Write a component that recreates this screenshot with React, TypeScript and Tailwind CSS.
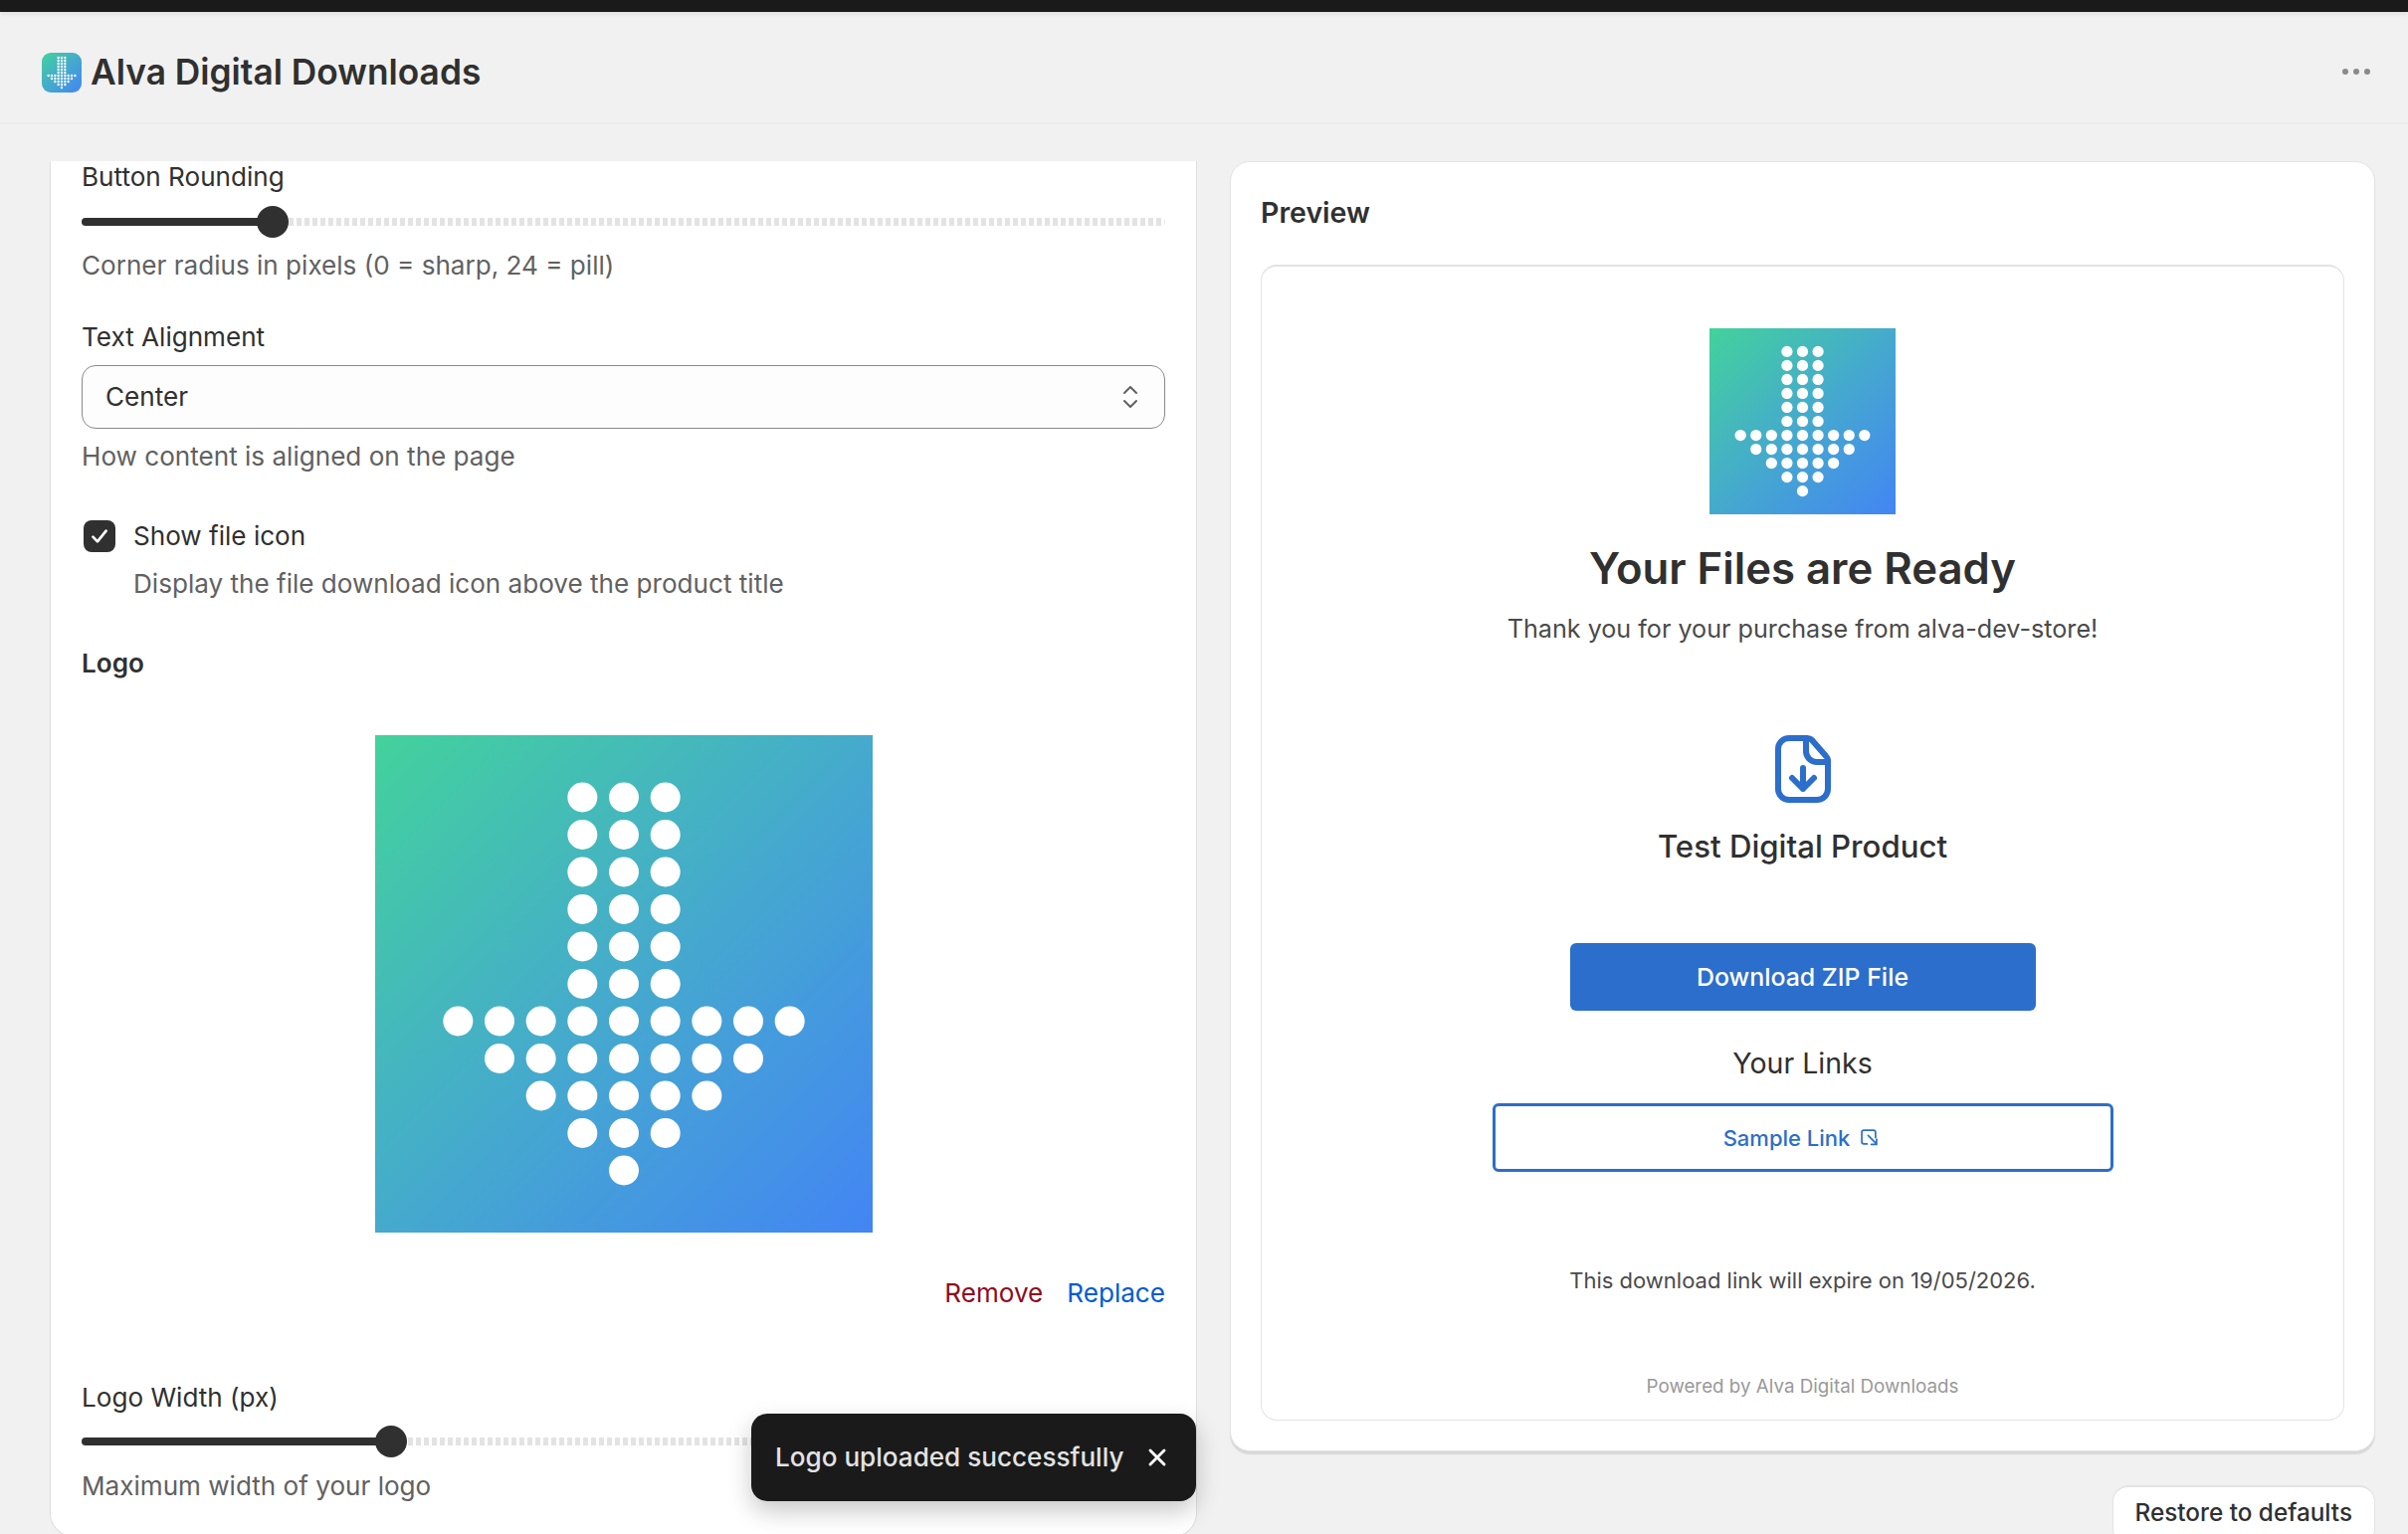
import { useId } from 'react'
import { X } from 'lucide-react'

const ROWS: [number, number][] = [
  [15, 1], [24, 1], [33, 1], [42, 1], [51, 1], [60, 1],
  [69, 4], [78, 3], [87, 2], [96, 1], [105, 0],
]

function AlvaLogo({ className }: { className: string }) {
  const id = useId()
  return (
    <svg viewBox="0 0 120 120" className={className} preserveAspectRatio="none">
      <defs>
        <linearGradient id={id} x1="0" y1="0" x2="1" y2="1">
          <stop offset="0" stopColor="#43d29c" />
          <stop offset="0.5" stopColor="#45aacd" />
          <stop offset="1" stopColor="#4385f4" />
        </linearGradient>
      </defs>
      <rect width="120" height="120" fill={`url(#${id})`} />
      {ROWS.map(([y, half]) =>
        Array.from({ length: half * 2 + 1 }, (_, i) => (
          <circle key={`${y}-${i}`} cx={60 + (i - half) * 10} cy={y} r="3.6" fill="#fff" />
        )),
      )}
    </svg>
  )
}

function Slider({ wide }: { wide?: boolean }) {
  return (
    <div className="relative h-8 flex items-center">
      <div className="h-2 w-full rounded-full bg-[repeating-linear-gradient(90deg,#e3e3e3_0_5px,transparent_5px_8px)]" />
      <div className={`absolute left-0 h-2 rounded-full bg-[#303030] ${wide ? 'w-[311px]' : 'w-[192px]'}`} />
      <div className={`absolute top-0 size-8 -ml-[16px] rounded-full bg-[#303030] ${wide ? 'left-[311px]' : 'left-[192px]'}`} />
    </div>
  )
}

export default function App() {
  return (
    <div className="relative h-[1542px] overflow-hidden bg-[#f1f1f1] font-['Inter',sans-serif] text-[26.1px] leading-8 text-[#303030]">
      <div className="h-3 bg-[#1a1a1a] shadow-[0_2px_4px_rgba(0,0,0,0.08)]" />

      {/* App title bar */}
      <div className="flex h-[113px] items-center border-b-2 border-[#ebebeb] pl-[42px] pr-[38px] pt-[10px]">
        <AlvaLogo className="size-10 rounded-[9px]" />
        <span className="ml-[9px] text-[35.3px] font-semibold leading-10">Alva Digital Downloads</span>
        <div className="ml-auto flex gap-[5px] -mt-[2px]">
          <span className="size-1.5 rounded-full bg-[#8a8a8a]" />
          <span className="size-1.5 rounded-full bg-[#8a8a8a]" />
          <span className="size-1.5 rounded-full bg-[#8a8a8a]" />
        </div>
      </div>

      <div className="flex gap-[33px] pl-[50px] pr-[33px] pt-[37px]">
        {/* Settings card, scrolled */}
        <div className="h-[1383px] w-[1153px] shrink-0 rounded-b-[24px] border-x border-b border-[#dedede] bg-white px-[31px]">
          <div>Button Rounding</div>
          <div className="mt-[13px]"><Slider /></div>
          <div className="mt-[12px] text-[#616161]">Corner radius in pixels (0 = sharp, 24 = pill)</div>

          <div className="mt-10">Text Alignment</div>
          <div className="mt-3 flex h-16 items-center justify-between rounded-[14px] border-[1.5px] border-[#8a8a8a] bg-[#fdfdfd] pl-[23px] pr-[26px]">
            <span>Center</span>
            <svg viewBox="0 0 16 24" className="h-6 w-4 text-[#616161]" fill="none" stroke="currentColor" strokeWidth="2" strokeLinecap="round" strokeLinejoin="round">
              <path d="M2 8l6-6 6 6M2 16l6 6 6-6" />
            </svg>
          </div>
          <div className="mt-3 text-[#616161]">How content is aligned on the page</div>

          <div className="mt-12 flex items-center">
            <div className="ml-[2px] flex size-8 items-center justify-center rounded-[8px] bg-[#303030]">
              <svg viewBox="0 0 20 20" className="size-6" fill="none" stroke="#fff" strokeWidth="2.2" strokeLinecap="round" strokeLinejoin="round">
                <path d="M4.5 10.5l3.8 4L15.5 5.5" />
              </svg>
            </div>
            <span className="ml-[18px]">Show file icon</span>
          </div>
          <div className="mt-4 pl-[52px] text-[#616161]">Display the file download icon above the product title</div>

          <div className="mt-12 font-semibold">Logo</div>
          <div className="mt-14 flex justify-center">
            <AlvaLogo className="size-[500px]" />
          </div>
          <div className="mt-[45px] flex justify-end gap-6">
            <span className="text-[#8e0b21]">Remove</span>
            <span className="text-[#005bd3]">Replace</span>
          </div>

          <div className="mt-[73px]">Logo Width (px)</div>
          <div className="mt-3"><Slider wide /></div>
          <div className="mt-[13px] text-[#616161]">Maximum width of your logo</div>
        </div>

        {/* Preview column */}
        <div className="min-w-0 flex-1">
          <div className="rounded-[20px] border border-[#e3e3e3] bg-white pb-[30px] pl-[30px] pr-[30px] pt-[35px] shadow-[0_3px_1px_rgba(0,0,0,0.1)]">
            <div className="text-[28.5px] font-semibold">Preview</div>
            <div className="mt-[36px] flex flex-col items-center rounded-[16px] border border-t-2 border-[#e3e3e3] pb-[17px] pt-[62px]">
              <AlvaLogo className="size-[187px]" />
              <div className="mt-[31px] text-[43.7px] font-semibold leading-[48px]">Your Files are Ready</div>
              <div className="mt-5 text-[25.15px] text-[#4a4a4a]">Thank you for your purchase from alva-dev-store!</div>
              <svg viewBox="0 0 56 68" className="mt-[91px] h-[68px] w-14" fill="none" stroke="#2c6ecb" strokeWidth="6" strokeLinecap="round" strokeLinejoin="round">
                <path d="M31 3H14A11 11 0 0 0 3 14V54A11 11 0 0 0 14 65H42A11 11 0 0 0 53 54V25Q53 23 51 21L37 5Q35 3 31 3Z" />
                <path d="M31 3V16A11 11 0 0 0 42 27H53" />
                <path d="M28 33V54M17 43L28 54L39 43" />
              </svg>
              <div className="mt-6 text-[31.2px] font-medium leading-10">Test Digital Product</div>
              <div className="mt-[77px] flex h-[68px] w-[468px] items-center justify-center rounded-[6px] bg-[#2c6ecb] text-[24.9px] font-medium text-white">Download ZIP File</div>
              <div className="mt-[37px] text-[28.5px]">Your Links</div>
              <div className="mt-6 flex h-[69px] w-[624px] items-center justify-center gap-[11px] rounded-[6px] border-[3px] border-[#2c6ecb] pr-[4px] text-[22px] font-medium text-[#2c6ecb]">
                <span>Sample Link</span>
                <svg viewBox="0 0 16 16" className="size-[17px]" fill="none" stroke="currentColor" strokeWidth="1.6" strokeLinecap="round" strokeLinejoin="round">
                  <path d="M6 14H3a2 2 0 0 1-2-2V3a2 2 0 0 1 2-2h9a2 2 0 0 1 2 2v5" />
                  <path d="M7 6l8 8M15 9.5V14.5H10" />
                </svg>
              </div>
              <div className="mt-[93px] text-[22px] text-[#4a4a4a]">This download link will expire on 19/05/2026.</div>
              <div className="mt-[75px] text-[18.8px] text-[#999999]">Powered by Alva Digital Downloads</div>
            </div>
          </div>
          <div className="mt-[34px] flex justify-end">
            <div className="flex h-[60px] items-start rounded-[16px] border border-t-2 border-[#e3e3e3] bg-white px-[22px] pt-[9px] text-[24.3px] font-medium">Restore to defaults</div>
          </div>
        </div>
      </div>

      {/* Toast */}
      <div className="absolute left-[755px] top-[1421px] flex h-[88px] w-[447px] items-center justify-between rounded-[16px] bg-[#1a1a1a] pl-[24px] pr-[25px] font-medium text-[#e3e3e3] shadow-[0_10px_24px_rgba(0,0,0,0.22)]">
        <span>Logo uploaded successfully</span>
        <X className="size-7 text-white" strokeWidth={2.5} />
      </div>
    </div>
  )
}
